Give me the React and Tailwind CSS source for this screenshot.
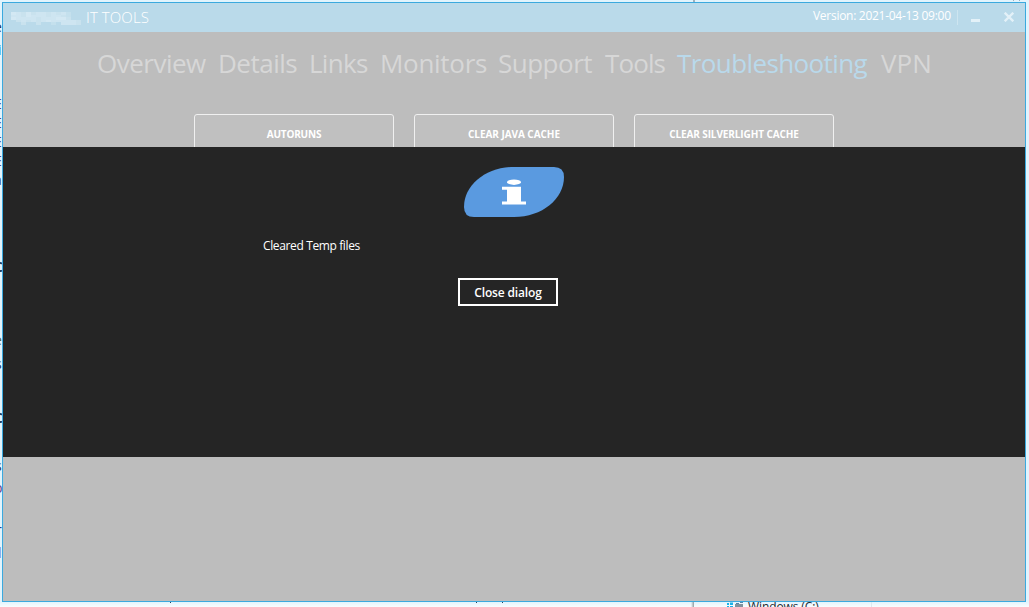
import React from "react";

const tabs = [
  { label: "Overview", box: "w-[121px]", track: "tracking-[-0.5px]" },
  { label: "Details", box: "w-[91px]", track: "tracking-[-0.5px]" },
  { label: "Links", box: "w-[71px]", track: "tracking-[-0.7px]" },
  { label: "Monitors", box: "w-[118px]", track: "tracking-[-0.3px]" },
  { label: "Support", box: "w-[107px]", track: "tracking-[-0.5px]" },
  { label: "Tools", box: "w-[72px]", track: "tracking-[-0.9px]" },
  { label: "Troubleshooting", box: "w-[204px]", track: "tracking-[-0.6px]", active: true },
  { label: "VPN", box: "w-[60px]", track: "tracking-[0px]" },
];

const actions = [
  { label: "AUTORUNS", track: "tracking-[-0.2px]" },
  { label: "CLEAR JAVA CACHE", track: "tracking-[-0.05px]" },
  { label: "CLEAR SILVERLIGHT CACHE", track: "tracking-[-0.1px]" },
];

const leftGlyphs = [
  { t: "e", c: "top-[18px] text-[#26324f]" },
  { t: "i", c: "top-[41px] pl-[4px] text-[#2383cf]" },
  { t: "E", c: "top-[95px] text-[#4a3f78]" },
  { t: "E", c: "top-[114px] text-[#4a3f78]" },
  { t: "E", c: "top-[133px] text-[#4a3f78]" },
  { t: "E", c: "top-[152px] text-[#4a3f78]" },
  { t: "a", c: "top-[171px] text-[#3d4a5d]" },
  { t: "C", c: "top-[258px] font-bold text-[#23415c]" },
  { t: "e", c: "top-[331px] text-[#52603a]" },
  { t: "s", c: "top-[355px] pl-px text-[#26324f]" },
  { t: "C", c: "top-[409px] font-bold text-[#23415c]" },
  { t: "s", c: "top-[457px] pl-px text-[#26324f]" },
  { t: "p", c: "top-[479px] text-[#6a3f88]" },
  { t: "r", c: "top-[521px] pl-[2px] text-[#283a88]" },
  { t: "l", c: "top-[544px] pl-[4px] text-[#6a3f88]" },
];

const mosaic = [
  "5435344343345445434200",
  "4435444344453444343200",
  "5444434445344355445300",
  "0343434544434444434443",
  "0030030020030033034443",
];

function TitleBar() {
  return (
    <header className="flex h-[29px] shrink-0 items-start bg-[#badaea] pl-2 text-white">
      <svg className="mt-[9px] h-[13px] w-[70px]" viewBox="0 0 14 5" preserveAspectRatio="none" shapeRendering="crispEdges">
        {mosaic.flatMap((row, y) =>
          [...row].filter((_, x) => x < 10 || x > 17).map((v, x) => (
            <rect key={`${x}-${y}`} x={x} y={y} width="1" height="1" fill="#e4f1f8" opacity={Number(v) * 0.12} />
          ))
        )}
      </svg>
      <span className="ml-[5px] mt-[4px] whitespace-nowrap text-[15px] font-light leading-5 tracking-[0.1px]">IT TOOLS</span>
      <span className="ml-auto mt-[5px] w-[139px] whitespace-nowrap text-[12px] leading-4 tracking-[-0.28px]">Version: 2021-04-13 09:00</span>
      <span className="ml-[5px] mt-[7px] h-[15px] w-px bg-[#cde5f0]" />
      <span className="ml-[13px] mt-4 h-[3px] w-[9px] bg-[#e3f1f8]" />
      <svg className="ml-6 mr-[11px] mt-[9px] h-[10px] w-[10px]" viewBox="0 0 10 10" stroke="#e3f1f8" strokeWidth="2.3">
        <path d="M.7 .7 9.3 9.3M9.3 .7.7 9.3" />
      </svg>
    </header>
  );
}

function Dialog() {
  return (
    <section className="h-[310px] shrink-0 bg-[#252525] pt-5 text-white">
      <svg className="ml-[461px] h-[50px] w-[100px]" viewBox="0 0 100 50">
        <path d="M50 0H90Q100 0 100 10C100 32 78 50 50 50H10Q0 50 0 40C0 18 22 0 50 0Z" fill="#5a9ae0" />
        <ellipse cx="50" cy="15.2" rx="7" ry="2.7" fill="#fff" />
        <path d="M38 19.8H57V34.5H62V37.5H38V34.5H43V22.8H38Z" fill="#fff" />
      </svg>
      <p className="ml-[260px] mt-[21px] text-[12px] leading-4 tracking-[-0.37px]">Cleared Temp files</p>
      <button className="ml-[455px] mt-6 flex h-7 w-[100px] items-center justify-center whitespace-nowrap border-2 border-white pt-px text-[12px] font-semibold leading-4 tracking-[-0.15px]">
        Close dialog
      </button>
    </section>
  );
}

export default function App() {
  return (
    <div className="relative h-[607px] w-[1029px] overflow-hidden bg-[#e2f4fd] p-[2px] font-['Open_Sans','Noto_Sans',sans-serif]">
      {leftGlyphs.map((g, i) => (
        <span key={i} aria-hidden="true" className={`absolute left-0 w-[14px] text-[14px] leading-[18px] ${g.c}`}>
          <span className="-ml-[6px]">{g.t}</span>
        </span>
      ))}
      <div className="absolute inset-x-0 bottom-0 flex h-[5px] overflow-hidden bg-linear-to-b from-[#e2f4fd] to-[#fafdff]">
        <div className="w-[691px]" />
        <div className="w-[3px] bg-linear-to-r from-transparent to-[#8f9ba1]" />
        <svg className="ml-8 h-[5px] w-[18px]" viewBox="0 0 18 5">
          <path d="M1 1h2v2H1zM4 .5h3V3H4zM1 4h2v1H1zM4 4h3v1H4z" fill="#1bb2e8" />
          <path d="M9 2h8v3H9z" fill="#7f929f" />
          <path d="M10 1h3v1h-3zM14 0h3v1h-3z" fill="#5484a8" />
        </svg>
        <span className="-mt-[3px] ml-1 whitespace-nowrap text-[12px] leading-4 tracking-[-0.1px] text-[#202a32]">Windows (C:)</span>
        <div className="ml-[52px] w-px bg-[#dce9f0]" />
      </div>
      <svg className="absolute bottom-[4px] left-0 h-px w-[600px]" viewBox="0 0 600 1">
        <path d="M170 0h1v1h-1zM476 0h1v1h-1zM502 0h1v1h-1z" fill="#28415a" />
      </svg>
      <svg className="absolute left-[693px] top-0 h-[2px] w-[336px]" viewBox="0 0 336 2">
        <path d="M0 0h2v2H0zM320 0h1v1h-1zM326 0h1v1h-1z" fill="#9eb1bc" />
      </svg>
      <main className="relative flex h-[600px] w-[1024px] flex-col border border-[#3ba9de] bg-[#bdbdbd]">
        <TitleBar />
        <nav className="flex h-[82px] shrink-0 pl-[94px] pt-[13px] text-[26px] leading-9">
          {tabs.map((t) => (
            <span key={t.label} className={`${t.box} ${t.track} whitespace-nowrap ${t.active ? "text-[#b9d9eb]" : "text-[#d7d7d7]"}`}>
              {t.label}
            </span>
          ))}
        </nav>
        <div className="flex h-[33px] shrink-0 gap-5 overflow-hidden pl-[191px]">
          {actions.map((a) => (
            <button key={a.label} className={`flex h-10 w-[200px] shrink-0 items-center justify-center rounded-[3px] border border-[#f0f0f0] bg-[#c0c0c0] text-[10px] font-bold text-white ${a.track}`}>
              {a.label}
            </button>
          ))}
        </div>
        <Dialog />
      </main>
    </div>
  );
}
